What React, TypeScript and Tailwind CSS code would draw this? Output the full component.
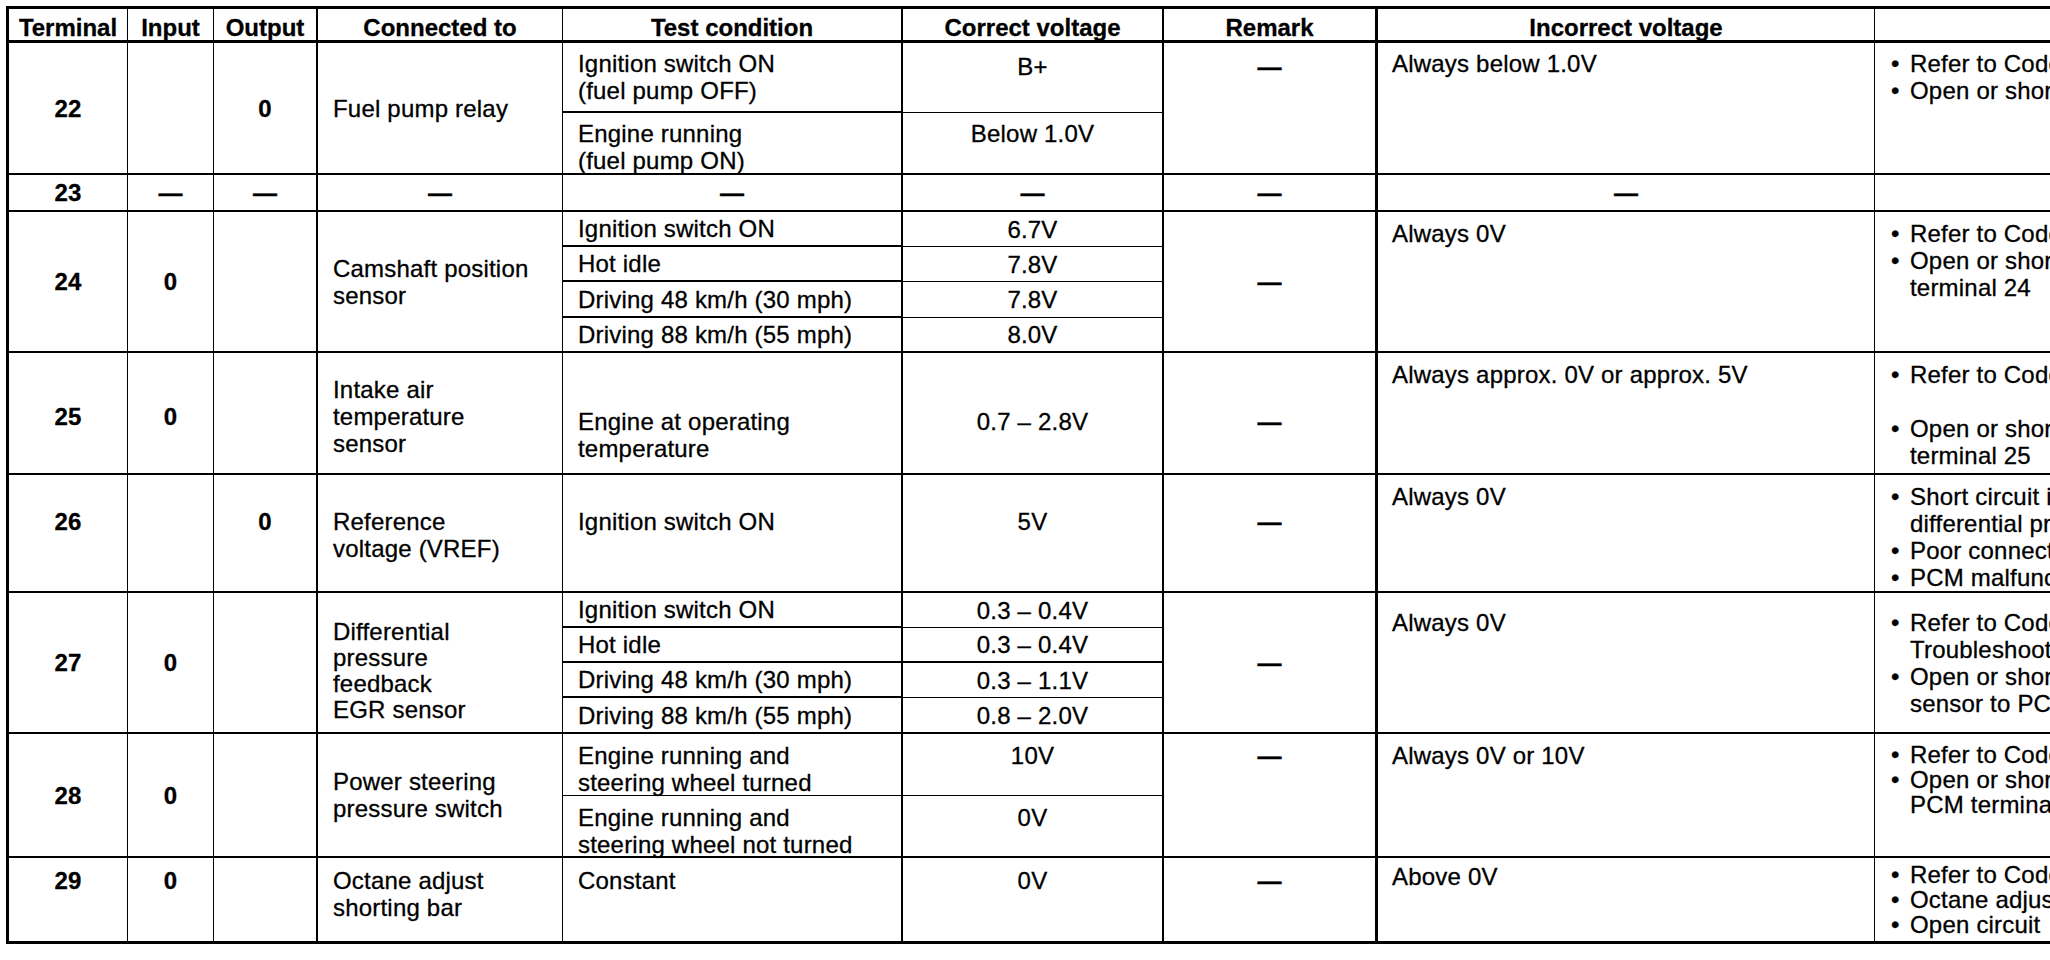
import React from "react";

function L({ t }: { t: string[] }) {
  return (
    <>
      {t.map((l, i) => (
        <div key={i} className="whitespace-nowrap">
          {l || "\u00a0"}
        </div>
      ))}
    </>
  );
}

function B({ items }: { items: string[][] }) {
  return (
    <div className="flex flex-col">
      {items.map((it, i) => (
        <div key={i} className="flex">
          <span className="w-[19px] shrink-0">•</span>
          <div>
            {it.map((l, j) => (
              <div key={j} className="whitespace-nowrap">
                {l || "\u00a0"}
              </div>
            ))}
          </div>
        </div>
      ))}
    </div>
  );
}

export default function App() {
  return (
    <div className="w-[2050px] h-[960px] overflow-hidden bg-white">
      <div className="ml-[6px] pt-[6px]">
        <div className="grid w-max grid-cols-[119px_86px_104px_245px_340px_261px_214px_497px_600px] grid-rows-[34px_70px_62px_37px_35px_35px_36px_35px_122px_118px_35px_35px_35px_36px_62px_62px_86px] border-l-[3px] border-t-[3px] border-black font-['Liberation_Sans',Arial,sans-serif] text-[24px] leading-[27px] tracking-[0.2px] text-black [-webkit-text-stroke:0.3px_#000]">
          {/* Header */}
          <div className="col-start-1 row-start-1 border-r border-b-[3px] border-black flex items-center justify-center pt-[6px] font-bold tracking-normal">Terminal</div>
          <div className="col-start-2 row-start-1 border-r border-b-[3px] border-black flex items-center justify-center pt-[6px] font-bold tracking-normal">Input</div>
          <div className="col-start-3 row-start-1 border-r-2 border-b-[3px] border-black flex items-center justify-center pt-[6px] font-bold tracking-normal">Output</div>
          <div className="col-start-4 row-start-1 border-r border-b-[3px] border-black flex items-center justify-center pt-[6px] font-bold tracking-normal">Connected to</div>
          <div className="col-start-5 row-start-1 border-r-2 border-b-[3px] border-black flex items-center justify-center pt-[6px] font-bold tracking-normal">Test condition</div>
          <div className="col-start-6 row-start-1 border-r-2 border-b-[3px] border-black flex items-center justify-center pt-[6px] font-bold tracking-normal">Correct voltage</div>
          <div className="col-start-7 row-start-1 border-r-[3px] border-b-[3px] border-black flex items-center justify-center pt-[6px] font-bold tracking-normal">Remark</div>
          <div className="col-start-8 row-start-1 border-r border-b-[3px] border-black flex items-center justify-center pt-[6px] font-bold tracking-normal">Incorrect voltage</div>
          <div className="col-start-9 row-start-1 border-b-[3px] border-black"></div>

          {/* Row 22 */}
          <div className="col-start-1 row-start-2 row-span-2 border-r border-b-2 border-black flex items-center justify-center font-bold">22</div>
          <div className="col-start-2 row-start-2 row-span-2 border-r border-b-2 border-black"></div>
          <div className="col-start-3 row-start-2 row-span-2 border-r-2 border-b-2 border-black flex items-center justify-center font-bold">0</div>
          <div className="col-start-4 row-start-2 row-span-2 border-r border-b-2 border-black flex flex-col justify-center pl-[15px]">Fuel pump relay</div>
          <div className="col-start-5 row-start-2 border-r-2 border-b-2 border-black pt-[7px] pl-[15px]"><L t={["Ignition switch ON", "(fuel pump OFF)"]} /></div>
          <div className="col-start-5 row-start-3 border-r-2 border-b-2 border-black pt-[7px] pl-[15px]"><L t={["Engine running", "(fuel pump ON)"]} /></div>
          <div className="col-start-6 row-start-2 border-r-2 border-b border-black pt-[10px] text-center">B+</div>
          <div className="col-start-6 row-start-3 border-r-2 border-b-2 border-black pt-[7px] text-center">Below 1.0V</div>
          <div className="col-start-7 row-start-2 row-span-2 border-r-[3px] border-b-2 border-black pt-[10px] text-center font-bold">—</div>
          <div className="col-start-8 row-start-2 row-span-2 border-r border-b-2 border-black pt-[7px] pl-[14px]">Always below 1.0V</div>
          <div className="col-start-9 row-start-2 row-span-2 border-b-2 border-black pt-[7px] pl-[16px]">
            <B items={[["Refer to Code No. 41 Troubleshooting"], ["Open or short circuit in fuel pump relay wiring"]]} />
          </div>

          {/* Row 23 */}
          <div className="col-start-1 row-start-4 border-r border-b-2 border-black flex items-center justify-center font-bold">23</div>
          <div className="col-start-2 row-start-4 border-r border-b-2 border-black flex items-center justify-center font-bold">—</div>
          <div className="col-start-3 row-start-4 border-r-2 border-b-2 border-black flex items-center justify-center font-bold">—</div>
          <div className="col-start-4 row-start-4 border-r border-b-2 border-black flex items-center justify-center font-bold">—</div>
          <div className="col-start-5 row-start-4 border-r-2 border-b-2 border-black flex items-center justify-center font-bold">—</div>
          <div className="col-start-6 row-start-4 border-r-2 border-b-2 border-black flex items-center justify-center font-bold">—</div>
          <div className="col-start-7 row-start-4 border-r-[3px] border-b-2 border-black flex items-center justify-center font-bold">—</div>
          <div className="col-start-8 row-start-4 border-r border-b-2 border-black flex items-center justify-center font-bold">—</div>
          <div className="col-start-9 row-start-4 border-b-2 border-black"></div>

          {/* Row 24 */}
          <div className="col-start-1 row-start-5 row-span-4 border-r border-b-2 border-black flex items-center justify-center font-bold">24</div>
          <div className="col-start-2 row-start-5 row-span-4 border-r border-b-2 border-black flex items-center justify-center font-bold">0</div>
          <div className="col-start-3 row-start-5 row-span-4 border-r-2 border-b-2 border-black"></div>
          <div className="col-start-4 row-start-5 row-span-4 border-r border-b-2 border-black flex flex-col justify-center pl-[15px]"><L t={["Camshaft position", "sensor"]} /></div>
          <div className="col-start-5 row-start-5 border-r-2 border-b-2 border-black flex items-center pl-[15px]">Ignition switch ON</div>
          <div className="col-start-5 row-start-6 border-r-2 border-b-2 border-black flex items-center pl-[15px]">Hot idle</div>
          <div className="col-start-5 row-start-7 border-r-2 border-b-2 border-black flex items-center pl-[15px]">Driving 48 km/h (30 mph)</div>
          <div className="col-start-5 row-start-8 border-r-2 border-b-2 border-black flex items-center pl-[15px]">Driving 88 km/h (55 mph)</div>
          <div className="col-start-6 row-start-5 border-r-2 border-b border-black flex items-center justify-center">6.7V</div>
          <div className="col-start-6 row-start-6 border-r-2 border-b border-black flex items-center justify-center">7.8V</div>
          <div className="col-start-6 row-start-7 border-r-2 border-b border-black flex items-center justify-center">7.8V</div>
          <div className="col-start-6 row-start-8 border-r-2 border-b-2 border-black flex items-center justify-center">8.0V</div>
          <div className="col-start-7 row-start-5 row-span-4 border-r-[3px] border-b-2 border-black flex items-center justify-center font-bold">—</div>
          <div className="col-start-8 row-start-5 row-span-4 border-r border-b-2 border-black pt-[8px] pl-[14px]">Always 0V</div>
          <div className="col-start-9 row-start-5 row-span-4 border-b-2 border-black pt-[8px] pl-[16px]">
            <B items={[["Refer to Code No. 03 Troubleshooting"], ["Open or short circuit between sensor and PCM", "terminal 24"]]} />
          </div>

          {/* Row 25 */}
          <div className="col-start-1 row-start-9 border-r border-b-2 border-black flex items-center justify-center pt-[6px] font-bold">25</div>
          <div className="col-start-2 row-start-9 border-r border-b-2 border-black flex items-center justify-center pt-[6px] font-bold">0</div>
          <div className="col-start-3 row-start-9 border-r-2 border-b-2 border-black"></div>
          <div className="col-start-4 row-start-9 border-r border-b-2 border-black flex flex-col justify-center pt-[6px] pl-[15px]"><L t={["Intake air", "temperature", "sensor"]} /></div>
          <div className="col-start-5 row-start-9 border-r-2 border-b-2 border-black pt-[55px] pl-[15px]"><L t={["Engine at operating", "temperature"]} /></div>
          <div className="col-start-6 row-start-9 border-r-2 border-b-2 border-black pt-[55px] text-center">0.7 – 2.8V</div>
          <div className="col-start-7 row-start-9 border-r-[3px] border-b-2 border-black pt-[55px] text-center font-bold">—</div>
          <div className="col-start-8 row-start-9 border-r border-b-2 border-black pt-[8px] pl-[14px]">Always approx. 0V or approx. 5V</div>
          <div className="col-start-9 row-start-9 border-b-2 border-black pt-[8px] pl-[16px]">
            <B items={[["Refer to Code No. 10 Troubleshooting", ""], ["Open or short circuit between sensor and PCM", "terminal 25"]]} />
          </div>

          {/* Row 26 */}
          <div className="col-start-1 row-start-10 border-r border-b-2 border-black pt-[33px] text-center font-bold">26</div>
          <div className="col-start-2 row-start-10 border-r border-b-2 border-black"></div>
          <div className="col-start-3 row-start-10 border-r-2 border-b-2 border-black pt-[33px] text-center font-bold">0</div>
          <div className="col-start-4 row-start-10 border-r border-b-2 border-black pt-[33px] pl-[15px]"><L t={["Reference", "voltage (VREF)"]} /></div>
          <div className="col-start-5 row-start-10 border-r-2 border-b-2 border-black pt-[33px] pl-[15px]">Ignition switch ON</div>
          <div className="col-start-6 row-start-10 border-r-2 border-b-2 border-black pt-[33px] text-center">5V</div>
          <div className="col-start-7 row-start-10 border-r-[3px] border-b-2 border-black pt-[33px] text-center font-bold">—</div>
          <div className="col-start-8 row-start-10 border-r border-b-2 border-black pt-[8px] pl-[14px]">Always 0V</div>
          <div className="col-start-9 row-start-10 border-b-2 border-black pt-[8px] pl-[16px]">
            <B items={[["Short circuit in wiring between", "differential pressure feedback EGR sensor"], ["Poor connection of PCM connector"], ["PCM malfunction"]]} />
          </div>

          {/* Row 27 */}
          <div className="col-start-1 row-start-11 row-span-4 border-r border-b-2 border-black flex items-center justify-center font-bold">27</div>
          <div className="col-start-2 row-start-11 row-span-4 border-r border-b-2 border-black flex items-center justify-center font-bold">0</div>
          <div className="col-start-3 row-start-11 row-span-4 border-r-2 border-b-2 border-black"></div>
          <div className="col-start-4 row-start-11 row-span-4 border-r border-b-2 border-black pt-[26px] pl-[15px] leading-[26px]"><L t={["Differential", "pressure", "feedback", "EGR sensor"]} /></div>
          <div className="col-start-5 row-start-11 border-r-2 border-b-2 border-black flex items-center pl-[15px]">Ignition switch ON</div>
          <div className="col-start-5 row-start-12 border-r-2 border-b-2 border-black flex items-center pl-[15px]">Hot idle</div>
          <div className="col-start-5 row-start-13 border-r-2 border-b-2 border-black flex items-center pl-[15px]">Driving 48 km/h (30 mph)</div>
          <div className="col-start-5 row-start-14 border-r-2 border-b-2 border-black flex items-center pl-[15px]">Driving 88 km/h (55 mph)</div>
          <div className="col-start-6 row-start-11 border-r-2 border-b border-black flex items-center justify-center">0.3 – 0.4V</div>
          <div className="col-start-6 row-start-12 border-r-2 border-b-2 border-black flex items-center justify-center">0.3 – 0.4V</div>
          <div className="col-start-6 row-start-13 border-r-2 border-b border-black flex items-center justify-center">0.3 – 1.1V</div>
          <div className="col-start-6 row-start-14 border-r-2 border-b-2 border-black flex items-center justify-center">0.8 – 2.0V</div>
          <div className="col-start-7 row-start-11 row-span-4 border-r-[3px] border-b-2 border-black flex items-center justify-center font-bold">—</div>
          <div className="col-start-8 row-start-11 row-span-4 border-r border-b-2 border-black pt-[16px] pl-[14px]">Always 0V</div>
          <div className="col-start-9 row-start-11 row-span-4 border-b-2 border-black pt-[16px] pl-[16px]">
            <B items={[["Refer to Code No. 16 and 32", "Troubleshooting"], ["Open or short circuit between", "sensor to PCM terminal 27"]]} />
          </div>

          {/* Row 28 */}
          <div className="col-start-1 row-start-15 row-span-2 border-r border-b-2 border-black flex items-center justify-center font-bold">28</div>
          <div className="col-start-2 row-start-15 row-span-2 border-r border-b-2 border-black flex items-center justify-center font-bold">0</div>
          <div className="col-start-3 row-start-15 row-span-2 border-r-2 border-b-2 border-black"></div>
          <div className="col-start-4 row-start-15 row-span-2 border-r border-b-2 border-black flex flex-col justify-center pl-[15px]"><L t={["Power steering", "pressure switch"]} /></div>
          <div className="col-start-5 row-start-15 border-r-2 border-b border-black pt-[8px] pl-[15px]"><L t={["Engine running and", "steering wheel turned"]} /></div>
          <div className="col-start-5 row-start-16 border-r-2 border-b-2 border-black pt-[8px] pl-[15px]"><L t={["Engine running and", "steering wheel not turned"]} /></div>
          <div className="col-start-6 row-start-15 border-r-2 border-b border-black pt-[8px] text-center">10V</div>
          <div className="col-start-6 row-start-16 border-r-2 border-b-2 border-black pt-[8px] text-center">0V</div>
          <div className="col-start-7 row-start-15 row-span-2 border-r-[3px] border-b-2 border-black pt-[8px] text-center font-bold">—</div>
          <div className="col-start-8 row-start-15 row-span-2 border-r border-b-2 border-black pt-[8px] pl-[14px]">Always 0V or 10V</div>
          <div className="col-start-9 row-start-15 row-span-2 border-b-2 border-black pt-[8px] pl-[16px] leading-[25px]">
            <B items={[["Refer to Code No. 50 Troubleshooting"], ["Open or short circuit between switch and", "PCM terminal 28"]]} />
          </div>

          {/* Row 29 */}
          <div className="col-start-1 row-start-17 border-r border-b-[3px] border-black pt-[9px] text-center font-bold">29</div>
          <div className="col-start-2 row-start-17 border-r border-b-[3px] border-black pt-[9px] text-center font-bold">0</div>
          <div className="col-start-3 row-start-17 border-r-2 border-b-[3px] border-black"></div>
          <div className="col-start-4 row-start-17 border-r border-b-[3px] border-black pt-[9px] pl-[15px]"><L t={["Octane adjust", "shorting bar"]} /></div>
          <div className="col-start-5 row-start-17 border-r-2 border-b-[3px] border-black pt-[9px] pl-[15px]">Constant</div>
          <div className="col-start-6 row-start-17 border-r-2 border-b-[3px] border-black pt-[9px] text-center">0V</div>
          <div className="col-start-7 row-start-17 border-r-[3px] border-b-[3px] border-black pt-[9px] text-center font-bold">—</div>
          <div className="col-start-8 row-start-17 border-r border-b-[3px] border-black pt-[5px] pl-[14px]">Above 0V</div>
          <div className="col-start-9 row-start-17 border-b-[3px] border-black pt-[4px] pl-[16px] leading-[25px]">
            <B items={[["Refer to Code No. 60 Troubleshooting"], ["Octane adjust shorting bar removed"], ["Open circuit"]]} />
          </div>
        </div>
      </div>
    </div>
  );
}
